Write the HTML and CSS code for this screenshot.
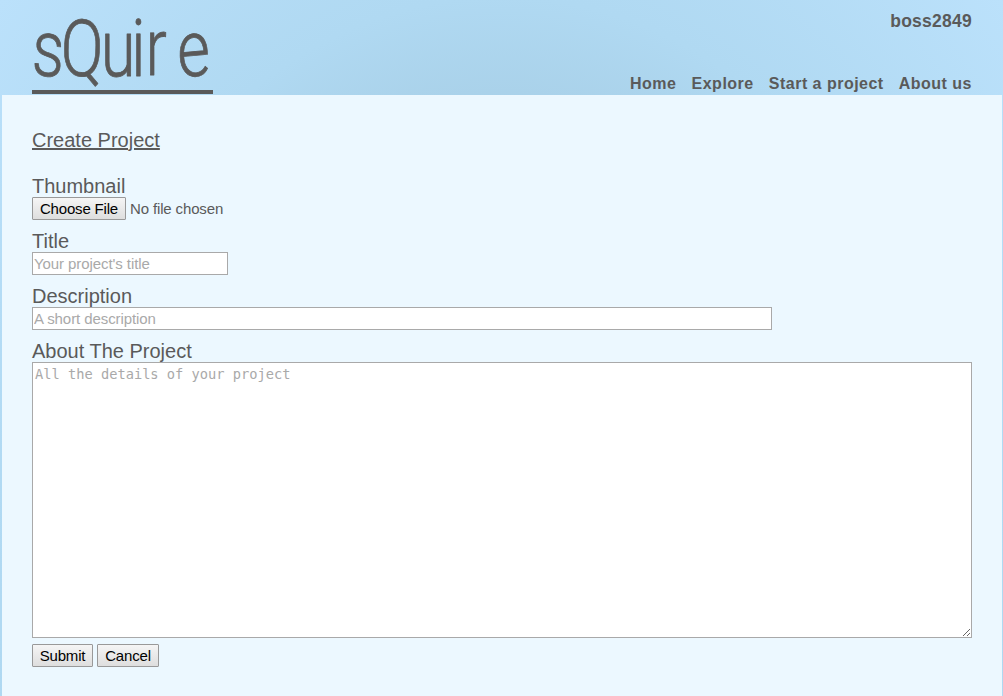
FILE: index.html
```html
<!DOCTYPE html>
<html lang="en">
<head>
<meta charset="utf-8">
<title>sQuire</title>
<link rel="stylesheet" href="styles.css">
</head>
<body>
<header class="header">
  <a class="logo" aria-label="sQuire">
    <svg width="181" height="90" viewBox="0 0 181 90"><text class="wordmark" transform="scale(.8 1)" x="-1 35 86 124 142 183" y="75 75 76 76 75 77.5" rotate="3 2 0 0 0 -4">sQuire</text></svg>
  </a>
  <div class="header-right">
    <a class="user">boss2849</a>
    <nav class="nav"><a>Home</a><a>Explore</a><a>Start a project</a><a>About us</a></nav>
  </div>
</header>
<main class="content">
  <h1 class="title">Create Project</h1>
  <form class="form">
    <div class="field"><label class="label">Thumbnail</label><div class="file"><button type="button" class="button choose">Choose File</button><span>No file chosen</span></div></div>
    <div class="field"><label class="label">Title</label><input class="input short" placeholder="Your project's title"></div>
    <div class="field"><label class="label">Description</label><input class="input long" placeholder="A short description"></div>
    <div class="field"><label class="label">About The Project</label><textarea class="details" placeholder="All the details of your project"></textarea></div>
    <div class="actions"><button type="button" class="button submit">Submit</button><button type="button" class="button cancel">Cancel</button></div>
  </form>
</main>
</body>
</html>
```
FILE: styles.css
```css
* { box-sizing: border-box; }
html { height: 100%; }
body {
  margin: 0;
  height: 696px;
  overflow: hidden;
  display: flex;
  flex-direction: column;
  padding: 0 1px 0 2px;
  color: #5a5a5a;
  font-family: "Liberation Sans", Arial, sans-serif;
  background: radial-gradient(ellipse 709px 990px at 50% 700px, #a5cde5 0%, #a9d1e9 60%, #b0d9f2 71%, #bbe1fb 100%);
}
.header {
  height: 95px;
  flex: none;
  display: flex;
  justify-content: space-between;
  padding: 0 30px;
}
.logo { height: 94px; width: 181px; border-bottom: 4px solid #5a5a5a; }
.logo svg { display: block; overflow: visible; }
.wordmark {
  font-family: Roboto, sans-serif;
  font-size: 79px;
  font-weight: 300;
  fill: #5a5a5a;
  stroke: #5a5a5a;
  stroke-width: .8px;
  stroke-linejoin: round;
}
.header-right {
  display: flex;
  flex-direction: column;
  justify-content: space-between;
  align-items: flex-end;
  padding: 11px 0 1px;
  font-weight: bold;
}
.user { font-size: 17.5px; line-height: 20px; letter-spacing: .25px; }
.nav { display: flex; gap: 15.2px; font-size: 16px; line-height: 20px; letter-spacing: .48px; }
.content { flex: 1; background: #ecf8ff; padding: 34px 30px 0; }
.title { margin: 0 0 23px; font-size: 20px; line-height: 23px; font-weight: normal; text-decoration: underline; }
.field { height: 55px; }
.field:nth-child(4) { height: 304px; }
.label { display: block; font-size: 20px; line-height: 22px; }
.file { display: flex; gap: 4px; align-items: center; font-size: 15px; letter-spacing: -.14px; }
.button {
  height: 23px;
  padding: 0;
  border: 1px solid #999;
  border-radius: 1px;
  background: linear-gradient(#f5f5f5, #dedede);
  font: 15px "Liberation Sans", Arial, sans-serif;
  letter-spacing: -.18px;
  color: #000;
}
.choose { width: 94px; }
.submit { width: 61px; }
.cancel { width: 62px; }
.input {
  display: block;
  height: 23px;
  border: 1px solid #a9a9a9;
  padding: 1px;
  background: #fff;
  font: 15px "Liberation Sans", Arial, sans-serif;
  letter-spacing: -.08px;
}
.short { width: 196px; }
.long { width: 740px; }
.details {
  display: block;
  width: 940px;
  height: 276px;
  border: 1px solid #a9a9a9;
  padding: 2px;
  background: #fff;
  font: 13.7px/19px "DejaVu Sans Mono", monospace;
}
.input::placeholder, .details::placeholder { color: #a9a9a9; opacity: 1; }
.actions { display: flex; gap: 4px; }
```
